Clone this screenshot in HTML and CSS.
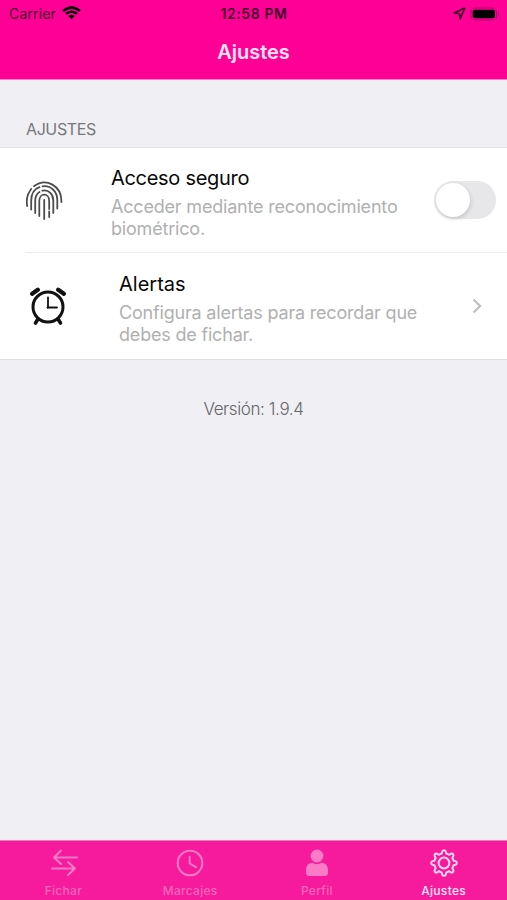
FILE: index.html
```html
<!DOCTYPE html>
<html lang="es">
<head>
<meta charset="utf-8">
<title>Ajustes</title>
<link rel="stylesheet" href="styles.css">
</head>
<body>
<div class="app">
  <header class="header">
    <div class="status">
      <div class="status-left">
        <span class="carrier">Carrier</span>
        <svg class="wifi" width="19" height="14" viewBox="0 0 18 14" preserveAspectRatio="none"><path d="M0.2 4.2C5.2-1 12.8-1 17.8 4.2L16 6C12 1.9 6 1.9 2 6ZM3 7C6.4 3.6 11.6 3.6 15 7L13.2 8.8C10.8 6.4 7.2 6.4 4.8 8.8ZM5.9 9.9C7.7 8.2 10.3 8.2 12.1 9.9L9 13.2Z"/></svg>
      </div>
      <span class="time">12:58 PM</span>
      <div class="status-right">
        <svg width="13" height="13" viewBox="0 0 12 12"><path d="M10.9 1L1 5.5L6 6.1L6.6 11Z" fill="none" stroke="#3f0027" stroke-width="1.5" stroke-linejoin="round"/></svg>
        <svg width="30" height="14" viewBox="0 0 30 14"><rect x="1" y="1" width="25.5" height="12" rx="3.5" fill="none" stroke="#b4006c"/><rect x="2.7" y="2.7" width="22.3" height="8.6" rx="1.8"/><path d="M28 5Q30 7 28 9Z" fill="#a80065"/></svg>
      </div>
    </div>
    <h1 class="title">Ajustes</h1>
  </header>
  <main class="content">
    <h2 class="section">AJUSTES</h2>
    <div class="list">
      <div class="row">
        <svg class="finger" width="37" height="39" viewBox="0 0 37 39">
          <path d="M1.2 25C0.2 20 .5 14 5.2 8M8 5.2C20-4 36 5 35.4 21M5.2 28.5V20C5.2 12 9 7.7 13.5 6.2M16.5 5.3C25.5 4.2 31.3 11 31.3 19V27.5M9.2 32V20C9.2 15.5 10.9 12.5 13.5 11M16.4 9.7C22.5 8 27.3 13.5 27.3 19.5V32M13.3 35V20C13.3 11.6 23.2 11.6 23.2 20V28M23.2 30.5V36M18.2 19V38"/>
        </svg>
        <div class="copy">
          <div class="name name-secure">Acceso seguro</div>
          <div class="desc">Acceder mediante reconocimiento<br>biométrico.</div>
        </div>
        <div class="toggle"><div class="knob"></div></div>
      </div>
      <div class="row alerts">
        <svg class="alarm" width="38" height="39" viewBox="0 0 38 39">
          <circle cx="19" cy="20" r="15" stroke-width="3"/>
          <path d="M3.2 6.8L8.8 2.8M34.8 6.8L29.2 2.8" stroke-width="4.3"/>
          <path d="M9 32L6.5 36M29 32L31.5 36" stroke-width="3.6"/>
          <path d="M19 10.5V20.5H28" stroke-width="1.8"/><circle cx="18.8" cy="20.5" r=".8"/>
        </svg>
        <div class="copy">
          <div class="name">Alertas</div>
          <div class="desc">Configura alertas para recordar que<br>debes de fichar.</div>
        </div>
        <svg class="chevron" width="10" height="16" viewBox="0 0 10 16"><path d="M1.5 1.5L8.2 8L1.5 14.5"/></svg>
      </div>
    </div>
    <p class="version">Versión: 1.9.4</p>
  </main>
  <nav class="tabs">
    <div class="tab">
      <svg class="swap" width="28" height="28" viewBox="0 0 28 28"><path d="M26 8.5H3M10 1.5L3 8.5L10 15M1 19.5H24M17 13L24 19.5L17 26"/></svg>
      <span>Fichar</span>
    </div>
    <div class="tab">
      <svg width="28" height="28" viewBox="0 0 28 28"><circle cx="14" cy="14" r="12.3"/><path d="M13.7 7.7V14.5L20 18.2"/></svg>
      <span>Marcajes</span>
    </div>
    <div class="tab profile">
      <svg width="28" height="28" viewBox="0 0 28 28"><circle cx="14" cy="7" r="6.4"/><path d="M9.5 13.8Q14 16.5 18.5 13.8C23 14 25 17 25 22V24Q25 27 21.5 27H6.5Q3 27 3 24V22C3 17 5 14 9.5 13.8Z"/></svg>
      <span>Perfil</span>
    </div>
    <div class="tab active">
      <svg width="28" height="28" viewBox="0 0 28 28"><circle cx="14" cy="14" r="5.4"/><path d="M14 1.2Q15.7 1.2 16 3L16.3 4.5Q18 5 19.2 5.8L20.5 4.9Q22 4 23 5Q24 6 23.1 7.5L22.3 8.9Q23.2 10.2 23.5 11.7L25 12Q26.8 12.3 26.8 14Q26.8 15.7 25 16L23.5 16.3Q23.2 17.8 22.3 19.1L23.1 20.5Q24 22 23 23Q22 24 20.5 23.1L19.2 22.2Q18 23 16.3 23.5L16 25Q15.7 26.8 14 26.8Q12.3 26.8 12 25L11.7 23.5Q10 23 8.8 22.2L7.5 23.1Q6 24 5 23Q4 22 4.9 20.5L5.7 19.1Q4.8 17.8 4.5 16.3L3 16Q1.2 15.7 1.2 14Q1.2 12.3 3 12L4.5 11.7Q4.8 10.2 5.7 8.9L4.9 7.5Q4 6 5 5Q6 4 7.5 4.9L8.8 5.8Q10 5 11.7 4.5L12 3Q12.3 1.2 14 1.2Z"/></svg>
      <span>Ajustes</span>
    </div>
  </nav>
</div>
</body>
</html>
```
FILE: styles.css
```css
* { box-sizing: border-box; }
body { margin: 0; font-family: Inter, "Liberation Sans", sans-serif; background: #efeff4; }
svg { display: block; flex: none; }
.app { height: 900px; display: flex; flex-direction: column; overflow: hidden; }
.header { height: 80px; background: #ff0096; border-bottom: 1px solid #ff79c5; }
.status { height: 27px; display: grid; grid-template-columns: 1fr auto 1fr; align-items: center; padding: 0 8px 0 9px; color: #420028; }
.status-left { display: flex; align-items: center; gap: 6px; }
.carrier { font-size: 14px; letter-spacing: .15px; }
.wifi { margin-top: -1px; }
.time { font-size: 14px; font-weight: 600; letter-spacing: .6px; }
.status-right { display: flex; align-items: center; justify-content: flex-end; gap: 4px; margin-right: -1px; }
.title { margin: 13px 0 0; text-align: center; color: #ffe5f4; font-size: 20px; line-height: 25px; font-weight: 600; letter-spacing: 0; }
.content { flex: 1; }
.section { margin: 0; height: 67px; padding: 39px 26px 0; font-size: 16px; line-height: 20px; font-weight: 400; letter-spacing: -.4px; color: #77777c; }
.list { background: #fff; border-top: 1px solid #e2e2e5; border-bottom: 1px solid #dedee1; height: 213px; }
.row { height: 105px; margin-left: 26px; display: flex; align-items: center; border-bottom: 1px solid #ececed; }
.alerts { height: 106px; border-bottom: 0; }
.finger { fill: none; stroke: #4c4c4c; stroke-width: 1.8; stroke-linecap: round; margin-right: 48px; }
.alarm { fill: none; stroke: #111; stroke-linecap: round; margin: 0 52px 0 3px; }
.copy { flex: 1; padding-top: 4px; white-space: nowrap; }
.name { font-size: 20px; line-height: 26px; color: #080808; margin-bottom: 5px; }
.name-secure { letter-spacing: -.3px; }
.desc { font-size: 18px; line-height: 22px; letter-spacing: -.19px; color: #b0b0b0; }
.toggle { width: 62px; height: 38px; border-radius: 19px; background: #e7e7e9; padding: 2px; margin-right: 11px; }
.knob { width: 34px; height: 34px; border-radius: 50%; background: #fff; box-shadow: 1px 2px 4px rgba(0, 0, 0, .14); }
.chevron { fill: none; stroke: #bfbfc3; stroke-width: 2.2; margin-right: 25px; }
.version { margin: 38px 0 0; text-align: center; font-size: 17px; line-height: 22px; font-weight: 300; letter-spacing: -.4px; color: #65656a; }
.tabs { height: 60px; display: grid; grid-template-columns: repeat(4, 1fr); background: #f51b9c; border-top: 1px solid #e980bd; }
.tab { display: flex; flex-direction: column; align-items: center; padding-top: 8px; font-size: 12px; font-weight: 500; line-height: 16px; letter-spacing: .3px; color: #fa67bd; }
.tab svg { fill: none; stroke: #fc7bc7; stroke-width: 2; stroke-linecap: round; stroke-linejoin: round; margin-bottom: 6px; }
.tab .swap { margin-left: 3px; }
.profile svg { fill: #fc7bc7; stroke: none; }
.active { color: #ffe5f4; }
.active svg { stroke: #ffd7ee; }
```
